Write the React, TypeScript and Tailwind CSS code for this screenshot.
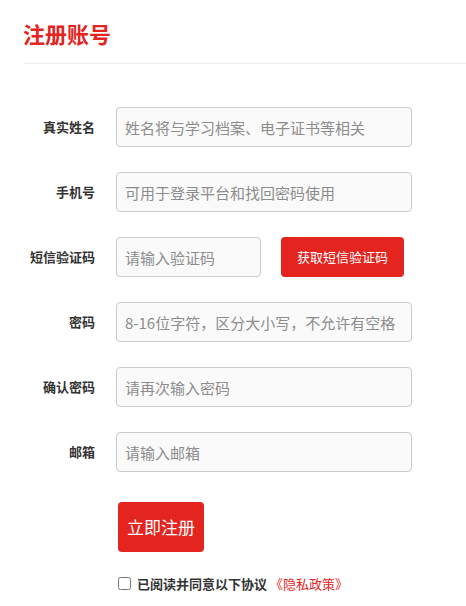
import React, { useState } from 'react';

const fields = [
  { label: '真实姓名', placeholder: '姓名将与学习档案、电子证书等相关', type: 'text' },
  { label: '手机号', placeholder: '可用于登录平台和找回密码使用', type: 'text' },
  { label: '短信验证码', placeholder: '请输入验证码', type: 'code' },
  { label: '密码', placeholder: '8-16位字符，区分大小写，不允许有空格', type: 'password' },
  { label: '确认密码', placeholder: '请再次输入密码', type: 'password' },
  { label: '邮箱', placeholder: '请输入邮箱', type: 'text' },
];

const inputCls =
  'h-[40px] rounded-[4px] border border-[#cccccc] bg-[#fafafa] px-[8px] text-[15px] text-[#333] outline-none placeholder:text-[#8c8c8c]';

export default function App() {
  const [agreed, setAgreed] = useState(false);

  return (
    <div
      className="min-h-[606px] w-[466px] bg-white"
      style={{ fontFamily: '"Noto Sans CJK SC", "Noto Sans", sans-serif' }}
    >
      {/* Header */}
      <div className="pl-[23px] pt-[18px]">
        <h1 className="h-[30px] text-[22px] font-bold leading-[30px] text-[#e3241f]">注册账号</h1>
        <div className="mt-[15px] h-px bg-[#f0f0f0]" />
      </div>

      {/* Form */}
      <div className="mt-[43px] flex flex-col gap-[25px] pl-[23px]">
        {fields.map((f) => (
          <div key={f.label} className="flex items-center">
            <label className="w-[72px] text-right text-[13px] font-bold text-[#333]">{f.label}</label>
            {f.type === 'code' ? (
              <div className="ml-[21px] flex items-center">
                <input className={`${inputCls} w-[145px]`} placeholder={f.placeholder} />
                <button className="ml-[20px] h-[40px] w-[123px] rounded-[4px] bg-[#e3241f] text-[13px] text-white">
                  获取短信验证码
                </button>
              </div>
            ) : (
              <input
                type={f.type}
                className={`${inputCls} ml-[21px] w-[296px]`}
                placeholder={f.placeholder}
              />
            )}
          </div>
        ))}
      </div>

      {/* Submit */}
      <div className="pl-[118px]">
        <button className="mt-[30px] h-[50px] w-[86px] rounded-[4px] bg-[#e3241f] text-[17px] text-white">
          立即注册
        </button>
        <label className="mt-[22px] flex items-center text-[13px]">
          <input
            type="checkbox"
            checked={agreed}
            onChange={(e) => setAgreed(e.target.checked)}
            className="m-0 h-[13px] w-[13px]"
          />
          <span className="ml-[6px] font-bold text-[#333]">已阅读并同意以下协议</span>
          <span className="ml-[3px] text-[#e3241f]">《隐私政策》</span>
        </label>
      </div>
    </div>
  );
}
